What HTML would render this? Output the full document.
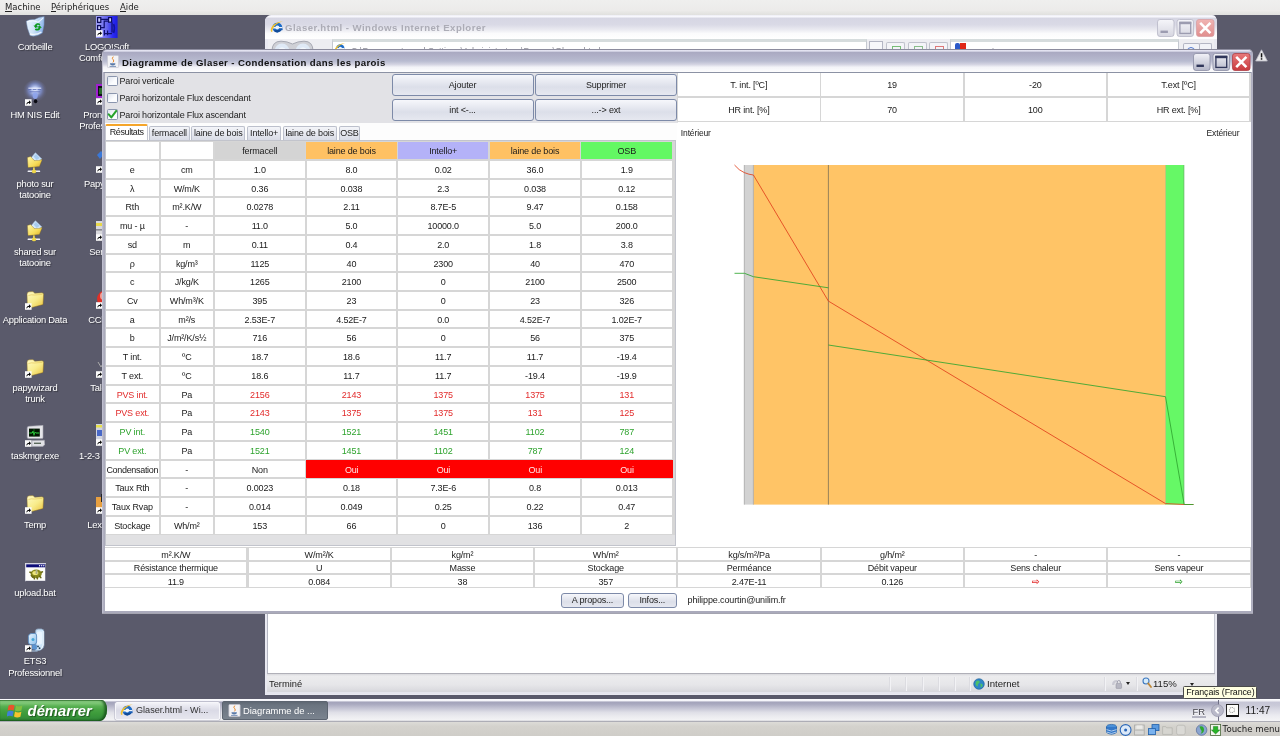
<!DOCTYPE html>
<html lang="fr"><head><meta charset="utf-8"><title>Diagramme de Glaser</title>
<style>

html,body{margin:0;padding:0;}
body{width:1280px;height:736px;overflow:hidden;background:#5a5a6b;font-family:"Liberation Sans","DejaVu Sans",sans-serif;}
#screen{position:relative;width:1280px;height:736px;overflow:hidden;background:#5a5a6b;will-change:transform;}
.a{position:absolute;}
.t{position:absolute;white-space:nowrap;line-height:1;}
/* host menu bar */
#menubar{left:0;top:0;width:1280px;height:14.6px;background:linear-gradient(#efefee,#ecebea 70%,#e0e0de);}
#menubar .t{font-family:"DejaVu Sans","Liberation Sans",sans-serif;font-size:8.5px;color:#222;top:2.6px;}
#menubar u{text-decoration:underline;}
/* desktop icons */
.dl{position:absolute;white-space:nowrap;line-height:11px;font-size:9.4px;letter-spacing:-.25px;color:#fff;text-align:center;text-shadow:1px 1px 1px rgba(0,0,0,.4);}
.ico{position:absolute;}
/* IE window */
#ie{left:265px;top:15.5px;width:952px;height:679.2px;background:#e9e9f1;border-radius:5px 5px 0 0;}
/* Java window */
#jw{left:102.4px;top:49px;width:1150.2px;height:564.7px;background:linear-gradient(90deg,#c4c4d4,#aaaabb 2px,#aaaabb 1148px,#b4b4c4);border-bottom:1.6px solid #a4a4b0;box-sizing:border-box;border-radius:5px 5px 0 0;}
.cell{position:absolute;letter-spacing:-.15px;background:#fff;text-align:center;white-space:nowrap;overflow:hidden;color:#1a1a1a;}
.jt{letter-spacing:-.15px;}
.btn{position:absolute;letter-spacing:-.15px;border:1px solid #7d8aa8;border-radius:3px;background:linear-gradient(#f6f7fb,#dcdfe9 60%,#e6e8f0);text-align:center;color:#222;box-sizing:border-box;white-space:nowrap;}
.tab{position:absolute;letter-spacing:-.15px;box-sizing:border-box;border:1px solid #bcc0cc;border-bottom:none;border-radius:2px 2px 0 0;background:linear-gradient(#f4f5f9,#d9dce6);text-align:center;color:#222;white-space:nowrap;}
</style></head>
<body>
<div id="screen">
<div id="menubar" class="a"><span class="t" style="left:5px">Machine</span><span class="t" style="left:51px">Périphériques</span><span class="t" style="left:120px">Aide</span><i class="a" style="left:5.4px;top:11.4px;width:6.6px;height:.9px;background:#222"></i><i class="a" style="left:51.4px;top:11.4px;width:4.6px;height:.9px;background:#222"></i><i class="a" style="left:120.2px;top:11.4px;width:5.4px;height:.9px;background:#222"></i></div>
<svg class="ico" style="left:96px;top:16px" width="22" height="22" viewBox="0 0 22 22"><defs><linearGradient id="glogo" x1="0" y1="0" x2="1" y2="0"><stop offset="0" stop-color="#a0a0f4"/><stop offset=".5" stop-color="#6464ee"/><stop offset=".78" stop-color="#2a2af4"/><stop offset="1" stop-color="#1c1cd8"/></linearGradient></defs><rect x="0" y="0" width="21.6" height="22" fill="url(#glogo)"/><path d="M1.6 1.6h3.2v4.8h-3.2zM12.6 1.6h3v4.6h-3zM1.6 9.6h3v4h-3z" fill="#c8c8fa" stroke="#0c0c5c" stroke-width="1.2"/><path d="M4.8 3.4h7.8M4.8 11.6h3.4v-6.4h4.4M8.4 14v5.4M11.6 14.6v4.6M8 17.6h8M16 6.4v10" fill="none" stroke="#10106e" stroke-width="1.2"/><path d="M17.6 8 q1.6 4 0 9" fill="none" stroke="#0a0a7a" stroke-width="1.6" stroke-opacity=".7"/></svg>
<svg class="ico" style="left:96.0px;top:30.4px" width="6.6" height="7" viewBox="0 0 7 7"><rect x="0" y="0" width="7" height="7" fill="#fbfbfb"/><path d="M1.4 6 C1.4 3.6 2.8 2.6 4.3 2.6 L4.3 1 L6.4 3.2 L4.3 5.3 L4.3 4 C3.2 4 2.4 4.6 1.4 6Z" fill="#080808"/></svg>
<div class="dl" style="left:52px;top:41px;width:110px">LOGO!Soft</div>
<div class="dl" style="left:50px;top:52px;width:110px">Comfort V5.0</div>
<svg class="ico" style="left:96px;top:84px" width="22" height="21" viewBox="0 0 22 21"><rect x="0" y="0" width="22" height="14" fill="#a020d0"/><rect x="2" y="2" width="18" height="10" fill="#101018"/><rect x="3" y="4" width="4" height="6" fill="#2a6a2a"/></svg>
<svg class="ico" style="left:96.0px;top:98.0px" width="6.6" height="7" viewBox="0 0 7 7"><rect x="0" y="0" width="7" height="7" fill="#fbfbfb"/><path d="M1.4 6 C1.4 3.6 2.8 2.6 4.3 2.6 L4.3 1 L6.4 3.2 L4.3 5.3 L4.3 4 C3.2 4 2.4 4.6 1.4 6Z" fill="#080808"/></svg>
<div class="dl" style="left:51px;top:109px;width:110px">Pronote 6.1</div>
<div class="dl" style="left:51px;top:120px;width:110px">Professionnel</div>
<svg class="ico" style="left:96px;top:150px" width="22" height="12" viewBox="0 0 22 12"><path d="M1 5 l4-4 l3 3 l-4 5z" fill="#3a78d8"/></svg>
<svg class="ico" style="left:96.0px;top:166.0px" width="6.6" height="7" viewBox="0 0 7 7"><rect x="0" y="0" width="7" height="7" fill="#fbfbfb"/><path d="M1.4 6 C1.4 3.6 2.8 2.6 4.3 2.6 L4.3 1 L6.4 3.2 L4.3 5.3 L4.3 4 C3.2 4 2.4 4.6 1.4 6Z" fill="#080808"/></svg>
<div class="dl" style="left:52px;top:178px;width:110px">Papywizard</div>
<svg class="ico" style="left:96px;top:221px" width="22" height="14" viewBox="0 0 22 14"><rect x="0" y="0" width="22" height="14" fill="#d8d8dc"/><rect x="0" y="2" width="22" height="3" fill="#e8d84a"/><rect x="0" y="8" width="22" height="1.6" fill="#8a8a92"/></svg>
<svg class="ico" style="left:96.0px;top:234.0px" width="6.6" height="7" viewBox="0 0 7 7"><rect x="0" y="0" width="7" height="7" fill="#fbfbfb"/><path d="M1.4 6 C1.4 3.6 2.8 2.6 4.3 2.6 L4.3 1 L6.4 3.2 L4.3 5.3 L4.3 4 C3.2 4 2.4 4.6 1.4 6Z" fill="#080808"/></svg>
<div class="dl" style="left:52px;top:246px;width:110px">Serveurs</div>
<svg class="ico" style="left:96px;top:289px" width="22" height="16" viewBox="0 0 22 16"><circle cx="10" cy="10" r="9" fill="#e03028"/><circle cx="8" cy="7" r="4" fill="#f0a098"/></svg>
<svg class="ico" style="left:96.0px;top:302.0px" width="6.6" height="7" viewBox="0 0 7 7"><rect x="0" y="0" width="7" height="7" fill="#fbfbfb"/><path d="M1.4 6 C1.4 3.6 2.8 2.6 4.3 2.6 L4.3 1 L6.4 3.2 L4.3 5.3 L4.3 4 C3.2 4 2.4 4.6 1.4 6Z" fill="#080808"/></svg>
<div class="dl" style="left:52px;top:314px;width:110px">CCleaner</div>
<svg class="ico" style="left:97px;top:361px" width="8" height="8" viewBox="0 0 8 8"><path d="M1 1l3 5l3-5" stroke="#aaa" fill="none"/></svg>
<svg class="ico" style="left:96.0px;top:371.0px" width="6.6" height="7" viewBox="0 0 7 7"><rect x="0" y="0" width="7" height="7" fill="#fbfbfb"/><path d="M1.4 6 C1.4 3.6 2.8 2.6 4.3 2.6 L4.3 1 L6.4 3.2 L4.3 5.3 L4.3 4 C3.2 4 2.4 4.6 1.4 6Z" fill="#080808"/></svg>
<div class="dl" style="left:52px;top:382px;width:110px">Talend 3</div>
<svg class="ico" style="left:96px;top:424px" width="22" height="16" viewBox="0 0 22 16"><rect x="0" y="0" width="22" height="16" fill="#d0d4e0"/><rect x="0" y="1" width="22" height="2.5" fill="#e8e04a"/><rect x="1" y="6" width="6" height="6" fill="#4868c8"/></svg>
<svg class="ico" style="left:96.0px;top:439.0px" width="6.6" height="7" viewBox="0 0 7 7"><rect x="0" y="0" width="7" height="7" fill="#fbfbfb"/><path d="M1.4 6 C1.4 3.6 2.8 2.6 4.3 2.6 L4.3 1 L6.4 3.2 L4.3 5.3 L4.3 4 C3.2 4 2.4 4.6 1.4 6Z" fill="#080808"/></svg>
<div class="dl" style="left:52px;top:450px;width:110px">1-2-3 Schéma</div>
<svg class="ico" style="left:96px;top:494px" width="22" height="14" viewBox="0 0 22 14"><rect x="0" y="3" width="12" height="11" fill="#e8a040"/><rect x="5" y="0" width="2" height="8" fill="#222"/></svg>
<svg class="ico" style="left:96.0px;top:507.0px" width="6.6" height="7" viewBox="0 0 7 7"><rect x="0" y="0" width="7" height="7" fill="#fbfbfb"/><path d="M1.4 6 C1.4 3.6 2.8 2.6 4.3 2.6 L4.3 1 L6.4 3.2 L4.3 5.3 L4.3 4 C3.2 4 2.4 4.6 1.4 6Z" fill="#080808"/></svg>
<div class="dl" style="left:53px;top:519px;width:110px">Lexmark 5</div>
<svg class="ico" style="left:25px;top:16px" width="21" height="22" viewBox="0 0 21 22"><defs><linearGradient id="gbin" x1="0" y1="0" x2="1" y2=".3"><stop offset="0" stop-color="#eef6ff"/><stop offset=".55" stop-color="#cfe4f8"/><stop offset="1" stop-color="#8fb6ec"/></linearGradient></defs><path d="M1.2 5.2 Q4 3.2 9.5 3.6 Q14 .6 19.2 .4 Q19.8 9 17.4 17 Q11 21.6 5 19.6 Q1.8 12 1.2 5.2Z" fill="url(#gbin)" stroke="#6d86b0" stroke-width=".7" stroke-opacity=".7"/><path d="M2.4 5.6 Q9 3.6 13 6.4 Q16 4 18.4 1.6" fill="none" stroke="#f8fcff" stroke-width="1.1" stroke-opacity=".85"/><path d="M5 17.8 Q11 19.6 16.4 16" fill="none" stroke="#ffffff" stroke-width="1.4" stroke-opacity=".8"/><path d="M15.4 8.2 a3.3 3.3 0 0 0 -5.6 1.4 l-1.3 -.2 l2.2 2.8 l2.4 -2.2 l-1.4 -.2 a1.6 1.6 0 0 1 2.6 -.5z" fill="#0c9a1c"/><path d="M9.8 13.4 a3.3 3.3 0 0 0 5.8 -1.6 l1.2 .1 l-2.1 -2.7 l-2.4 2.2 l1.5 .2 a1.6 1.6 0 0 1 -2.7 .6z" fill="#0c9a1c"/></svg>
<div class="dl" style="left:-20px;top:41px;width:110px">Corbeille</div>
<svg class="ico" style="left:22px;top:80px" width="26" height="26" viewBox="0 0 26 26"><defs><radialGradient id="gnis" cx=".5" cy=".42" r=".5"><stop offset="0" stop-color="#e6ecfc"/><stop offset=".28" stop-color="#b4c2ee"/><stop offset=".55" stop-color="#7c8cc8" stop-opacity=".8"/><stop offset=".85" stop-color="#6a6f98" stop-opacity=".25"/><stop offset="1" stop-color="#6a6f98" stop-opacity="0"/></radialGradient></defs><circle cx="13" cy="12" r="12" fill="url(#gnis)"/><path d="M6.4 9.6h3M10.8 9.6h3.6M15.6 9.6h3.4M7.4 11.8h11" stroke="#5668b4" stroke-width="1" stroke-opacity=".8"/><path d="M6.4 8.2h12.8" stroke="#eef2ff" stroke-width="1" stroke-opacity=".9"/><ellipse cx="13.2" cy="15.6" rx="2.6" ry="3.4" fill="#8ea4ec" fill-opacity=".9"/><ellipse cx="13.6" cy="21.2" rx="1.7" ry="2" fill="#0a0a12"/></svg>
<svg class="ico" style="left:25.0px;top:98.6px" width="6.6" height="7" viewBox="0 0 7 7"><rect x="0" y="0" width="7" height="7" fill="#fbfbfb"/><path d="M1.4 6 C1.4 3.6 2.8 2.6 4.3 2.6 L4.3 1 L6.4 3.2 L4.3 5.3 L4.3 4 C3.2 4 2.4 4.6 1.4 6Z" fill="#080808"/></svg>
<div class="dl" style="left:-20px;top:109px;width:110px">HM NIS Edit</div>
<svg class="ico" style="left:26px;top:152px" width="18" height="22" viewBox="0 0 18 22"><defs><linearGradient id="gnfa" x1="0" y1="0" x2="1" y2="1"><stop offset="0" stop-color="#fff6a8"/><stop offset=".6" stop-color="#f6dc58"/><stop offset="1" stop-color="#d8a828"/></linearGradient></defs><path d="M5 6 L9.4 .8 L15.8 7 L11 10.6Z" fill="#d4e8fa" stroke="#a8c8ec" stroke-width=".6"/><path d="M7.6 4.4 L10 2 L13.6 6 L10.6 8Z" fill="#a8ccf0"/><path d="M1.4 5.4 L4.6 4.6 L8.4 8.6 L13 8.4 L16.2 7.4 L13.4 14.6 L2 15.6Z" fill="url(#gnfa)" stroke="#8a6a18" stroke-width=".5" stroke-opacity=".7"/><rect x="1.6" y="18.6" width="12.6" height="1.5" rx=".7" fill="#f0f0f6"/><rect x="7" y="15.4" width="1.8" height="3" fill="#e8d050"/><ellipse cx="8" cy="19.4" rx="2.1" ry="1.9" fill="#eed648"/></svg>
<div class="dl" style="left:-20px;top:178px;width:110px">photo sur</div>
<div class="dl" style="left:-20px;top:189px;width:110px">tatooine</div>
<svg class="ico" style="left:26px;top:220px" width="18" height="22" viewBox="0 0 18 22"><defs><linearGradient id="gnfb" x1="0" y1="0" x2="1" y2="1"><stop offset="0" stop-color="#fff6a8"/><stop offset=".6" stop-color="#f6dc58"/><stop offset="1" stop-color="#d8a828"/></linearGradient></defs><path d="M5 6 L9.4 .8 L15.8 7 L11 10.6Z" fill="#d4e8fa" stroke="#a8c8ec" stroke-width=".6"/><path d="M7.6 4.4 L10 2 L13.6 6 L10.6 8Z" fill="#a8ccf0"/><path d="M1.4 5.4 L4.6 4.6 L8.4 8.6 L13 8.4 L16.2 7.4 L13.4 14.6 L2 15.6Z" fill="url(#gnfb)" stroke="#8a6a18" stroke-width=".5" stroke-opacity=".7"/><rect x="1.6" y="18.6" width="12.6" height="1.5" rx=".7" fill="#f0f0f6"/><rect x="7" y="15.4" width="1.8" height="3" fill="#e8d050"/><ellipse cx="8" cy="19.4" rx="2.1" ry="1.9" fill="#eed648"/></svg>
<div class="dl" style="left:-20px;top:246px;width:110px">shared sur</div>
<div class="dl" style="left:-20px;top:257px;width:110px">tatooine</div>
<svg class="ico" style="left:26px;top:291px" width="19" height="17" viewBox="0 0 19 17"><defs><linearGradient id="gfoa" x1="0" y1="0" x2=".9" y2="1"><stop offset="0" stop-color="#fffac4"/><stop offset=".55" stop-color="#f8ec8c"/><stop offset="1" stop-color="#ecc848"/></linearGradient></defs><path d="M1 3.2 Q1 1 3 .8 L6.4 .6 Q8 .8 8.6 2.2 L16 1.8 Q17.6 1.8 17.6 3.4 L17 13.6 L6 16.4 Q1.6 16.2 1.3 13 Z" fill="url(#gfoa)" stroke="#8a6c1c" stroke-width=".6" stroke-opacity=".75"/><path d="M2.4 4.6 Q5 3.4 8.6 4 L16.4 3.4" fill="none" stroke="#e0c050" stroke-width=".7" stroke-opacity=".8"/></svg>
<svg class="ico" style="left:25.0px;top:303.3px" width="6.6" height="7" viewBox="0 0 7 7"><rect x="0" y="0" width="7" height="7" fill="#fbfbfb"/><path d="M1.4 6 C1.4 3.6 2.8 2.6 4.3 2.6 L4.3 1 L6.4 3.2 L4.3 5.3 L4.3 4 C3.2 4 2.4 4.6 1.4 6Z" fill="#080808"/></svg>
<div class="dl" style="left:-20px;top:314px;width:110px">Application Data</div>
<svg class="ico" style="left:26px;top:359px" width="19" height="17" viewBox="0 0 19 17"><defs><linearGradient id="gfob" x1="0" y1="0" x2=".9" y2="1"><stop offset="0" stop-color="#fffac4"/><stop offset=".55" stop-color="#f8ec8c"/><stop offset="1" stop-color="#ecc848"/></linearGradient></defs><path d="M1 3.2 Q1 1 3 .8 L6.4 .6 Q8 .8 8.6 2.2 L16 1.8 Q17.6 1.8 17.6 3.4 L17 13.6 L6 16.4 Q1.6 16.2 1.3 13 Z" fill="url(#gfob)" stroke="#8a6c1c" stroke-width=".6" stroke-opacity=".75"/><path d="M2.4 4.6 Q5 3.4 8.6 4 L16.4 3.4" fill="none" stroke="#e0c050" stroke-width=".7" stroke-opacity=".8"/></svg>
<svg class="ico" style="left:25.0px;top:371.3px" width="6.6" height="7" viewBox="0 0 7 7"><rect x="0" y="0" width="7" height="7" fill="#fbfbfb"/><path d="M1.4 6 C1.4 3.6 2.8 2.6 4.3 2.6 L4.3 1 L6.4 3.2 L4.3 5.3 L4.3 4 C3.2 4 2.4 4.6 1.4 6Z" fill="#080808"/></svg>
<div class="dl" style="left:-20px;top:382px;width:110px">papywizard</div>
<div class="dl" style="left:-20px;top:393px;width:110px">trunk</div>
<svg class="ico" style="left:25px;top:425px" width="20" height="22" viewBox="0 0 20 22"><path d="M2.2 3 Q2.2 1.4 4 1.3 L16 .6 L18 .2 L18 12.4 Q18 13.6 16.4 13.6 L3.6 13.6 Q2.2 13.6 2.2 12Z" fill="#e6e6ea" stroke="#a4a4ae" stroke-width=".6"/><rect x="4" y="3.6" width="10.8" height="8" fill="#021402"/><path d="M4.4 8 h2.8 l.8 -1.8 l1 3.6 l1 -2.6 l.8 .8 h3.6" fill="none" stroke="#30d840" stroke-width="1"/><path d="M9 4v7.4" stroke="#1c8c28" stroke-width=".7"/><path d="M7 15.6 L19.4 15.2 L19.8 19.4 L18 21.4 L7 21.4Z" fill="#e2e2e6" stroke="#a4a4ae" stroke-width=".6"/><rect x="9" y="17.6" width="7" height="1.4" fill="#5c6a5c"/></svg>
<svg class="ico" style="left:25.0px;top:439.8px" width="6.6" height="7" viewBox="0 0 7 7"><rect x="0" y="0" width="7" height="7" fill="#fbfbfb"/><path d="M1.4 6 C1.4 3.6 2.8 2.6 4.3 2.6 L4.3 1 L6.4 3.2 L4.3 5.3 L4.3 4 C3.2 4 2.4 4.6 1.4 6Z" fill="#080808"/></svg>
<div class="dl" style="left:-20px;top:450px;width:110px">taskmgr.exe</div>
<svg class="ico" style="left:26px;top:495px" width="19" height="17" viewBox="0 0 19 17"><defs><linearGradient id="gfoc" x1="0" y1="0" x2=".9" y2="1"><stop offset="0" stop-color="#fffac4"/><stop offset=".55" stop-color="#f8ec8c"/><stop offset="1" stop-color="#ecc848"/></linearGradient></defs><path d="M1 3.2 Q1 1 3 .8 L6.4 .6 Q8 .8 8.6 2.2 L16 1.8 Q17.6 1.8 17.6 3.4 L17 13.6 L6 16.4 Q1.6 16.2 1.3 13 Z" fill="url(#gfoc)" stroke="#8a6c1c" stroke-width=".6" stroke-opacity=".75"/><path d="M2.4 4.6 Q5 3.4 8.6 4 L16.4 3.4" fill="none" stroke="#e0c050" stroke-width=".7" stroke-opacity=".8"/></svg>
<svg class="ico" style="left:25.0px;top:507.3px" width="6.6" height="7" viewBox="0 0 7 7"><rect x="0" y="0" width="7" height="7" fill="#fbfbfb"/><path d="M1.4 6 C1.4 3.6 2.8 2.6 4.3 2.6 L4.3 1 L6.4 3.2 L4.3 5.3 L4.3 4 C3.2 4 2.4 4.6 1.4 6Z" fill="#080808"/></svg>
<div class="dl" style="left:-20px;top:519px;width:110px">Temp</div>
<svg class="ico" style="left:25px;top:563px" width="21" height="19" viewBox="0 0 21 19"><rect x=".5" y=".5" width="20" height="17.6" fill="#fdfdfa" stroke="#d8d8e4" stroke-width=".9"/><path d="M.4 18.4 H20.8 V1" fill="none" stroke="#3c3c50" stroke-width=".8"/><rect x="1.2" y="1.3" width="18.8" height="3" fill="#0c0c78"/><circle cx="14.6" cy="2.8" r=".7" fill="#fff"/><circle cx="16.7" cy="2.8" r=".7" fill="#fff"/><circle cx="18.8" cy="2.8" r=".7" fill="#fff"/><ellipse cx="11.2" cy="10.8" rx="5.6" ry="4.2" fill="#8a8a1c"/><path d="M6.4 12.4 l1.4 1.8 M9 13.8 l.4 2 M12 14.2 l.4 1.6 M14.6 13.2 l1.2 1.4 M6 9.6 l-1 -.4 M16.4 9.4 l1 -.6" stroke="#6a6a14" stroke-width="1.6" stroke-linecap="round"/><ellipse cx="10.4" cy="10" rx="3" ry="2" fill="#eee67c"/><rect x="10.6" y="7" width="1.8" height="4" fill="#b0b088"/></svg>
<div class="dl" style="left:-20px;top:587px;width:110px">upload.bat</div>
<svg class="ico" style="left:26px;top:628px" width="20" height="24" viewBox="0 0 20 24"><defs><linearGradient id="gets" x1="0" y1="0" x2="1" y2="1"><stop offset="0" stop-color="#eaf6ff"/><stop offset="1" stop-color="#8cc0ec"/></linearGradient></defs><path d="M9.6 3 Q9.6 1 12 1 L15.4 1 Q18 1.2 18 4 L18 17 Q17.6 21.6 13 22.4 L9.6 22.4Z" fill="#cfe6fa" stroke="#8aa4c0" stroke-width=".9"/><rect x="11" y="3.4" width="5" height="13" rx="1.4" fill="#eaf5ff"/><path d="M17.2 3 V17 Q16.8 20 14 21.4" fill="none" stroke="#f4faff" stroke-width="1"/><path d="M2.4 8.6 Q2.4 6 5 5.6 L9 5.4 Q10.6 5.6 10.6 8 L10.6 14 Q10.4 16.4 8 16.6 L4.6 16.6 Q2.4 16.4 2.4 14Z" fill="url(#gets)" stroke="#5c8cc0" stroke-width=".9"/><circle cx="7" cy="11.4" r="1.5" fill="#48a8d8"/><path d="M6.2 16.8 L6 21 Q8.4 22.6 11 21 L10.8 16.8Z" fill="#5c94d0"/><circle cx="12" cy="18.4" r=".9" fill="#20405c"/><circle cx="13.6" cy="20.2" r=".9" fill="#20405c"/><path d="M6 23h5.6" stroke="#a8c8e8" stroke-width="1"/></svg>
<svg class="ico" style="left:25.0px;top:644.8px" width="6.6" height="7" viewBox="0 0 7 7"><rect x="0" y="0" width="7" height="7" fill="#fbfbfb"/><path d="M1.4 6 C1.4 3.6 2.8 2.6 4.3 2.6 L4.3 1 L6.4 3.2 L4.3 5.3 L4.3 4 C3.2 4 2.4 4.6 1.4 6Z" fill="#080808"/></svg>
<div class="dl" style="left:-20px;top:655px;width:110px">ETS3</div>
<div class="dl" style="left:-20px;top:667px;width:110px">Professionnel</div>
<svg class="ico" style="left:1255px;top:49px" width="13" height="13" viewBox="0 0 13 13"><path d="M6.5 .8 L12.3 12 H.7Z" fill="#e9e9ec" stroke="#bdbdc6" stroke-width=".8"/><rect x="5.8" y="4.2" width="1.5" height="4.2" fill="#111"/><rect x="5.8" y="9.2" width="1.5" height="1.5" fill="#111"/></svg>
<div id="ie" class="a">
<div class="a" style="left:1.5px;top:-.8px;width:949px;height:4px;background:#f1f1f8;border-radius:4px 4px 0 0"></div>
<div class="a" style="left:0;top:0;width:952px;height:23px;border-radius:5px 5px 0 0;background:linear-gradient(#fbfbff 0,#f3f3fa 5%,#d6d6e3 9%,#dadae6 38%,#e9e9f0 58%,#fbfbfc 76%,#ffffff 100%)"></div>
<svg class="ico" style="left:5px;top:4px" width="14" height="14" viewBox="0 0 16 16"><circle cx="8.4" cy="8.6" r="5.6" fill="#1d6cc8"/><path d="M4 12 a5.6 5.6 0 0 0 9.6 -1.4 z" fill="#124a96"/><circle cx="8.4" cy="8.6" r="2.3" fill="#eef4fb"/><rect x="3" y="8" width="11" height="1.7" fill="#eef4fb"/><rect x="10" y="9.6" width="4.4" height="2" fill="#1a5cb4"/><path d="M1.2 13.5 C-1 8 7 1.2 14.6 1.6 C9 2.6 2.2 8 2.6 13.6Z" fill="#f0c030"/></svg>
<div class="t" style="left:20px;top:7.2px;font-size:9.6px;font-weight:bold;color:#acacb6;letter-spacing:.48px">Glaser.html - Windows Internet Explorer</div>
<svg class="ico" style="left:892px;top:3px" width="58" height="18" viewBox="0 0 58 18"><defs><linearGradient id="cbi" x1="0" y1="0" x2="0" y2="1"><stop offset="0" stop-color="#f6f6fa"/><stop offset="1" stop-color="#d6d6e0"/></linearGradient><linearGradient id="cci" x1="0" y1="0" x2="0" y2="1"><stop offset="0" stop-color="#f0b4b2"/><stop offset="1" stop-color="#e08e8e"/></linearGradient></defs><rect x=".5" y=".5" width="16.5" height="17" rx="2.5" fill="url(#cbi)" stroke="#b8b8c6" stroke-width=".8"/><rect x="3.5" y="11.6" width="7.4" height="2.4" fill="#9c9cb0"/><rect x="20" y=".5" width="16.5" height="17" rx="2.5" fill="url(#cbi)" stroke="#b8b8c6" stroke-width=".8"/><rect x="22.9" y="3.4" width="10.8" height="11" fill="none" stroke="#9c9cb0" stroke-width="1.3"/><rect x="22.3" y="2.8" width="12" height="2.4" fill="#9c9cb0"/><rect x="39.5" y=".5" width="17.5" height="17" rx="2.5" fill="url(#cci)" stroke="#d8a0a4" stroke-width=".8"/><path d="M43.2 3.8 L53.4 14.2 M53.4 3.8 L43.2 14.2" stroke="#fff" stroke-width="2.6" stroke-linecap="butt"/></svg>
<div class="a" style="left:3px;top:23px;width:946px;height:12px;background:#eeeef2"></div>
<svg class="ico" style="left:6px;top:24px" width="44" height="11" viewBox="0 0 44 11"><path d="M1 11 Q1 1.2 10 1.2 Q16 1.2 21.5 4 Q27 1.2 33 1.2 Q42 1.2 42 11Z" fill="#cfd0d6" stroke="#a6a8b2" stroke-width="1"/><circle cx="11" cy="11" r="7.4" fill="#dfe9f6"/><circle cx="32" cy="11" r="7.4" fill="#dfe9f6"/><circle cx="11" cy="11.5" r="4" fill="#f3f7fc"/><circle cx="32" cy="11.5" r="4" fill="#f3f7fc"/></svg>
<div class="a" style="left:67px;top:23px;width:535px;height:12px;background:#fff;border:1px solid #c4c8d0;border-top:3px solid #d6dcdd;border-bottom:none;box-sizing:border-box"></div>
<svg class="ico" style="left:69px;top:26px" width="12" height="12" viewBox="0 0 16 16"><circle cx="8.4" cy="8.6" r="5.6" fill="#1d6cc8"/><path d="M4 12 a5.6 5.6 0 0 0 9.6 -1.4 z" fill="#124a96"/><circle cx="8.4" cy="8.6" r="2.3" fill="#eef4fb"/><rect x="3" y="8" width="11" height="1.7" fill="#eef4fb"/><rect x="10" y="9.6" width="4.4" height="2" fill="#1a5cb4"/><path d="M1.2 13.5 C-1 8 7 1.2 14.6 1.6 C9 2.6 2.2 8 2.6 13.6Z" fill="#f0c030"/></svg>
<div class="t" style="left:86px;top:31.6px;font-size:9px;color:#8e8e98">C:\Documents and Settings\Administrateur\Bureau\Glaser.html</div>
<div class="a" style="left:604px;top:25px;width:12px;height:10px;background:#f7f7fa;border:1px solid #b4b6c4;border-bottom:none"></div>
<div class="a" style="left:621px;top:26px;width:17px;height:9px;background:#f4f4f8;border:1px solid #c0c2cc;border-bottom:none;border-radius:2px 2px 0 0"></div>
<div class="a" style="left:627px;top:30px;width:7px;height:5px;border:1px solid #58b058;border-bottom:none;opacity:.8"></div>
<div class="a" style="left:643px;top:26px;width:17px;height:9px;background:#f4f4f8;border:1px solid #c0c2cc;border-bottom:none;border-radius:2px 2px 0 0"></div>
<div class="a" style="left:649px;top:30px;width:7px;height:5px;border:1px solid #70b070;border-bottom:none;opacity:.8"></div>
<div class="a" style="left:664px;top:26px;width:17px;height:9px;background:#f4f4f8;border:1px solid #c0c2cc;border-bottom:none;border-radius:2px 2px 0 0"></div>
<div class="a" style="left:670px;top:30px;width:7px;height:5px;border:1px solid #d85a5a;border-bottom:none;opacity:.8"></div>
<div class="a" style="left:685px;top:23px;width:229px;height:12px;background:#fff;border:1px solid #c4c8d0;border-top:3px solid #d6dcdd;border-bottom:none;box-sizing:border-box"></div>
<div class="a" style="left:690px;top:27px;width:5px;height:8px;background:#2a58c8;border-radius:2px 2px 0 0"></div>
<div class="a" style="left:695px;top:27px;width:6px;height:8px;background:#e02818"></div>
<div class="t" style="left:705px;top:32px;font-size:9px;color:#9a9aa4">Google</div>
<div class="a" style="left:918px;top:27px;width:15px;height:8px;background:#f2f3f8;border:1px solid #b4b6c4;border-bottom:none;border-radius:2px 2px 0 0"></div>
<div class="a" style="left:922px;top:31px;width:6px;height:6px;border:1.5px solid #5078d0;border-radius:50%"></div>
<div class="a" style="left:934px;top:27px;width:11px;height:8px;background:#f2f3f8;border:1px solid #b4b6c4;border-bottom:none;border-radius:2px 2px 0 0"></div>
<div class="a" style="left:2px;top:35px;width:948px;height:623px;background:#fff;border-left:1px solid #b4b6c2;border-right:1px solid #c6c8d2;box-sizing:border-box"></div>
<div class="a" style="left:2px;top:657.6px;width:948px;height:19.2px;background:linear-gradient(#d9d9dd 0,#ececee 12%,#e6e6e9 60%,#d7d7dc 100%);border-top:1px solid #b0b0b8;box-sizing:border-box"></div>
<div class="t" style="left:4px;top:664px;font-size:9.3px;color:#222">Terminé</div>
<div class="a" style="left:624.0px;top:661px;width:1px;height:14px;background:#dcdce1;box-shadow:1px 0 0 #f2f2f5"></div>
<div class="a" style="left:640.0px;top:661px;width:1px;height:14px;background:#dcdce1;box-shadow:1px 0 0 #f2f2f5"></div>
<div class="a" style="left:656.5px;top:661px;width:1px;height:14px;background:#dcdce1;box-shadow:1px 0 0 #f2f2f5"></div>
<div class="a" style="left:673.0px;top:661px;width:1px;height:14px;background:#dcdce1;box-shadow:1px 0 0 #f2f2f5"></div>
<div class="a" style="left:689.0px;top:661px;width:1px;height:14px;background:#dcdce1;box-shadow:1px 0 0 #f2f2f5"></div>
<div class="a" style="left:704.0px;top:661px;width:1px;height:14px;background:#dcdce1;box-shadow:1px 0 0 #f2f2f5"></div>
<div class="a" style="left:839.0px;top:661px;width:1px;height:14px;background:#dcdce1;box-shadow:1px 0 0 #f2f2f5"></div>
<div class="a" style="left:870.5px;top:661px;width:1px;height:14px;background:#dcdce1;box-shadow:1px 0 0 #f2f2f5"></div>
<svg class="ico" style="left:708px;top:662px" width="12" height="12" viewBox="0 0 12 12"><circle cx="6" cy="6" r="5.3" fill="#2f86c8" stroke="#1d5c96" stroke-width=".6"/><path d="M3 3.5 q2-1.6 3.6-.4 q.6 1.6-1 2.4 q-1.4 1.2-.6 3 q-2-.6-2.6-2.6z" fill="#4cc06a"/><path d="M7.6 5.6 q2 0 2.2 1.8 q-.8 2-2.4 2.2 q.8-2-.2-3z" fill="#4cc06a"/></svg>
<div class="t" style="left:722px;top:663px;font-size:9.6px;color:#222">Internet</div>
<svg class="ico" style="left:846px;top:662px" width="12" height="12" viewBox="0 0 12 12"><path d="M1 7 q0-5 5-5 v2 q-2.6 0-2.6 3z" fill="#c9c9d2"/><rect x="5" y="5.4" width="5.6" height="5" rx=".6" fill="#b7b7c2" stroke="#8d8d9a" stroke-width=".5"/><path d="M6.3 5.4 v-1.4 a1.5 1.5 0 0 1 3 0 v1.4" fill="none" stroke="#9a9aa8" stroke-width=".9"/></svg>
<div class="a" style="left:861px;top:666px;width:0;height:0;border-left:2.5px solid transparent;border-right:2.5px solid transparent;border-top:3px solid #222"></div>
<svg class="ico" style="left:877px;top:661px" width="10" height="12" viewBox="0 0 10 12"><circle cx="4" cy="4" r="3" fill="#d6ecfb" stroke="#3d78c0" stroke-width="1.1"/><path d="M6.2 6.4 L9 10" stroke="#c08a3a" stroke-width="1.8" stroke-linecap="round"/></svg>
<div class="t" style="left:888px;top:663px;font-size:9.6px;color:#222">115%</div>
<div class="a" style="left:925px;top:667px;width:0;height:0;border-left:2.5px solid transparent;border-right:2.5px solid transparent;border-top:3px solid #222"></div>
<div class="a" style="left:0;top:676.8px;width:952px;height:1.9px;background:#e6e6ee"></div>
</div>
<div id="jw" class="a"></div>
<div class="a" style="left:103px;top:50px;width:1149px;height:22px;border-radius:4px 4px 0 0;background:linear-gradient(#e6e6f3 0,#dcdcec 6%,#a9a9c1 9%,#adadc5 20%,#b8bbd0 50%,#d2d2e1 65%,#f3f3f8 78%,#fdfdfe 100%);box-shadow:0 -1px 0 #8c8c9e"></div>
<svg class="ico" style="left:107px;top:55px" width="12" height="13" viewBox="0 0 12 13"><rect x=".4" y=".4" width="11.2" height="12.2" rx="1" fill="#f3f3f6" stroke="#c4c4d0" stroke-width=".7"/><path d="M6.3 1.6 q-2 1.8 0 3.2 q1.2 1.2-.4 2.6" fill="none" stroke="#e8892a" stroke-width="1"/><path d="M3 8.2 h5.4 q.2 2-2.7 2.2 q-2.9-.2-2.7-2.2z" fill="#5a7aa8"/><path d="M2.6 11.4 h6.4" stroke="#5a7aa8" stroke-width=".8"/></svg>
<div class="t" style="left:122px;top:58.2px;font-size:9.6px;font-weight:bold;color:#111;letter-spacing:.4px">Diagramme de Glaser - Condensation dans les parois</div>
<svg class="ico" style="left:1193px;top:53px" width="58" height="18" viewBox="0 0 58 18"><defs><linearGradient id="cba" x1="0" y1="0" x2="0" y2="1"><stop offset="0" stop-color="#f2f2f8"/><stop offset="1" stop-color="#b4b6c8"/></linearGradient><linearGradient id="cca" x1="0" y1="0" x2="0" y2="1"><stop offset="0" stop-color="#e8797a"/><stop offset="1" stop-color="#c83a3e"/></linearGradient></defs><rect x=".5" y=".5" width="16.5" height="17" rx="2.5" fill="url(#cba)" stroke="#8c8ea4" stroke-width=".8"/><rect x="3.5" y="11.6" width="7.4" height="2.4" fill="#30365a"/><rect x="20" y=".5" width="16.5" height="17" rx="2.5" fill="url(#cba)" stroke="#8c8ea4" stroke-width=".8"/><rect x="22.9" y="3.4" width="10.8" height="11" fill="none" stroke="#30365a" stroke-width="1.3"/><rect x="22.3" y="2.8" width="12" height="2.4" fill="#30365a"/><rect x="39.5" y=".5" width="17.5" height="17" rx="2.5" fill="url(#cca)" stroke="#b04048" stroke-width=".8"/><path d="M43.2 3.8 L53.4 14.2 M53.4 3.8 L43.2 14.2" stroke="#fff" stroke-width="2.6" stroke-linecap="butt"/></svg>
<div class="a" style="left:105px;top:72px;width:1145.6px;height:538.6px;background:#fff"></div>
<div class="a" style="left:104px;top:71.8px;width:1147.4px;height:1.6px;background:#8c92a4"></div>
<div class="a" style="left:105px;top:73px;width:286px;height:50px;background:#e2e2e6"></div>
<div class="a" style="left:106.9px;top:75.6px;width:10.8px;height:10.8px;box-sizing:border-box;border:1.1px solid #8a95ad;border-radius:1.5px;background:linear-gradient(135deg,#dfe4ee,#fbfcfe 60%)"></div>
<div class="a" style="left:106.9px;top:92.5px;width:10.8px;height:10.8px;box-sizing:border-box;border:1.1px solid #8a95ad;border-radius:1.5px;background:linear-gradient(135deg,#dfe4ee,#fbfcfe 60%)"></div>
<div class="a" style="left:106.9px;top:109.4px;width:10.8px;height:10.8px;box-sizing:border-box;border:1.1px solid #8a95ad;border-radius:1.5px;background:linear-gradient(135deg,#dfe4ee,#fbfcfe 60%)"></div>
<svg class="ico" style="left:106.9px;top:109.4px" width="10.8" height="10.8" viewBox="0 0 10 10"><path d="M1.6 5 L4 7.8 L8.6 1.8" fill="none" stroke="#27a32b" stroke-width="1.9" stroke-linecap="round" stroke-linejoin="round"/></svg>
<div class="t jt" style="left:119.5px;top:77px;font-size:9.00px;color:#222">Paroi verticale</div>
<div class="t jt" style="left:119.5px;top:94px;font-size:9.00px;color:#222">Paroi horizontale Flux descendant</div>
<div class="t jt" style="left:119.5px;top:111px;font-size:9.00px;color:#222">Paroi horizontale Flux ascendant</div>
<div class="a" style="left:391px;top:73px;width:287px;height:50px;background:#e2e2e6"></div>
<div class="btn" style="left:391.50px;top:73.70px;width:142.00px;height:22.60px;line-height:21.10px;font-size:9.00px">Ajouter</div>
<div class="btn" style="left:535.00px;top:73.70px;width:142.00px;height:22.60px;line-height:21.10px;font-size:9.00px">Supprimer</div>
<div class="btn" style="left:391.50px;top:98.70px;width:142.00px;height:22.60px;line-height:21.10px;font-size:9.00px">int &lt;-...</div>
<div class="btn" style="left:535.00px;top:98.70px;width:142.00px;height:22.60px;line-height:21.10px;font-size:9.00px">...-&gt; ext</div>
<div class="a" style="left:677px;top:72.5px;width:574px;height:49.5px;background:#d6d6d6"></div>
<div class="cell" style="left:678.10px;top:72.80px;width:141.45px;height:23.50px;line-height:24.70px;font-size:9.00px;color:#1a1a1a;background:#fff;">T. int. [ºC]</div>
<div class="cell" style="left:821.35px;top:72.80px;width:141.45px;height:23.50px;line-height:24.70px;font-size:9.00px;color:#1a1a1a;background:#fff;">19</div>
<div class="cell" style="left:964.60px;top:72.80px;width:141.45px;height:23.50px;line-height:24.70px;font-size:9.00px;color:#1a1a1a;background:#fff;">-20</div>
<div class="cell" style="left:1107.85px;top:72.80px;width:141.45px;height:23.50px;line-height:24.70px;font-size:9.00px;color:#1a1a1a;background:#fff;">T.ext [ºC]</div>
<div class="cell" style="left:678.10px;top:98.00px;width:141.45px;height:22.80px;line-height:24.00px;font-size:9.00px;color:#1a1a1a;background:#fff;">HR int. [%]</div>
<div class="cell" style="left:821.35px;top:98.00px;width:141.45px;height:22.80px;line-height:24.00px;font-size:9.00px;color:#1a1a1a;background:#fff;">70</div>
<div class="cell" style="left:964.60px;top:98.00px;width:141.45px;height:22.80px;line-height:24.00px;font-size:9.00px;color:#1a1a1a;background:#fff;">100</div>
<div class="cell" style="left:1107.85px;top:98.00px;width:141.45px;height:22.80px;line-height:24.00px;font-size:9.00px;color:#1a1a1a;background:#fff;">HR ext. [%]</div>
<div class="a" style="left:105px;top:122.6px;width:572px;height:17.4px;background:#fdfdfd"></div>
<div class="tab" style="left:149.20px;top:126px;width:40.40px;height:13.6px;line-height:13.4px;font-size:9.00px">fermacell</div>
<div class="tab" style="left:191.20px;top:126px;width:54.10px;height:13.6px;line-height:13.4px;font-size:9.00px">laine de bois</div>
<div class="tab" style="left:247.20px;top:126px;width:33.80px;height:13.6px;line-height:13.4px;font-size:9.00px">Intello+</div>
<div class="tab" style="left:282.80px;top:126px;width:53.80px;height:13.6px;line-height:13.4px;font-size:9.00px">laine de bois</div>
<div class="tab" style="left:338.60px;top:126px;width:21.70px;height:13.6px;line-height:13.4px;font-size:9.00px">OSB</div>
<div class="a" style="left:105px;top:124px;width:43.4px;height:16px;box-sizing:border-box;background:#fff;border:1px solid #c4c6d0;border-bottom:none;border-top:2px solid #f5a52a;border-radius:2px 2px 0 0;text-align:center;font-size:9.00px;line-height:12.4px;color:#1a1a1a;white-space:nowrap;letter-spacing:-.38px">Résultats</div>
<div class="a" style="left:104.6px;top:139.6px;width:571.6px;height:406.8px;box-sizing:border-box;background:#e1e1e3;border:1px solid #c2c4cc"></div>
<div class="a" style="left:105.6px;top:141.1px;width:569px;height:394.2px;background:#d6d6d6"></div>
<div class="cell" style="left:106.00px;top:142.10px;width:52.60px;height:16.73px;line-height:18.73px;font-size:9.00px;color:#1a1a1a;background:#fff;"></div>
<div class="cell" style="left:160.60px;top:142.10px;width:52.40px;height:16.73px;line-height:18.73px;font-size:9.00px;color:#1a1a1a;background:#fff;"></div>
<div class="a" style="left:214.50px;top:141.60px;width:90.40px;height:17.63px;background:#d4d4d4"></div>
<div class="cell" style="left:215.00px;top:142.10px;width:89.60px;height:16.73px;line-height:18.73px;font-size:9.00px;color:#1a1a1a;background:#d4d4d4;">fermacell</div>
<div class="a" style="left:306.10px;top:141.60px;width:90.50px;height:17.63px;background:#ffc163"></div>
<div class="cell" style="left:306.60px;top:142.10px;width:89.70px;height:16.73px;line-height:18.73px;font-size:9.00px;color:#1a1a1a;background:#ffc163;">laine de bois</div>
<div class="a" style="left:397.80px;top:141.60px;width:90.60px;height:17.63px;background:#b4b2f8"></div>
<div class="cell" style="left:398.30px;top:142.10px;width:89.80px;height:16.73px;line-height:18.73px;font-size:9.00px;color:#1a1a1a;background:#b4b2f8;">Intello+</div>
<div class="a" style="left:489.60px;top:141.60px;width:90.60px;height:17.63px;background:#ffc163"></div>
<div class="cell" style="left:490.10px;top:142.10px;width:89.80px;height:16.73px;line-height:18.73px;font-size:9.00px;color:#1a1a1a;background:#ffc163;">laine de bois</div>
<div class="a" style="left:581.40px;top:141.60px;width:90.50px;height:17.63px;background:#63f863"></div>
<div class="cell" style="left:581.90px;top:142.10px;width:89.70px;height:16.73px;line-height:18.73px;font-size:9.00px;color:#1a1a1a;background:#63f863;">OSB</div>
<div class="cell" style="left:106.00px;top:160.83px;width:52.60px;height:16.74px;line-height:18.74px;font-size:9.00px;color:#1a1a1a;background:#fff;">e</div>
<div class="cell" style="left:160.60px;top:160.83px;width:52.40px;height:16.74px;line-height:18.74px;font-size:9.00px;color:#1a1a1a;background:#fff;">cm</div>
<div class="cell" style="left:215.00px;top:160.83px;width:89.60px;height:16.74px;line-height:18.74px;font-size:9.00px;color:#1a1a1a;background:#fff;">1.0</div>
<div class="cell" style="left:306.60px;top:160.83px;width:89.70px;height:16.74px;line-height:18.74px;font-size:9.00px;color:#1a1a1a;background:#fff;">8.0</div>
<div class="cell" style="left:398.30px;top:160.83px;width:89.80px;height:16.74px;line-height:18.74px;font-size:9.00px;color:#1a1a1a;background:#fff;">0.02</div>
<div class="cell" style="left:490.10px;top:160.83px;width:89.80px;height:16.74px;line-height:18.74px;font-size:9.00px;color:#1a1a1a;background:#fff;">36.0</div>
<div class="cell" style="left:581.90px;top:160.83px;width:89.70px;height:16.74px;line-height:18.74px;font-size:9.00px;color:#1a1a1a;background:#fff;">1.9</div>
<div class="cell" style="left:106.00px;top:179.57px;width:52.60px;height:16.74px;line-height:18.74px;font-size:9.00px;color:#1a1a1a;background:#fff;">λ</div>
<div class="cell" style="left:160.60px;top:179.57px;width:52.40px;height:16.74px;line-height:18.74px;font-size:9.00px;color:#1a1a1a;background:#fff;">W/m/K</div>
<div class="cell" style="left:215.00px;top:179.57px;width:89.60px;height:16.74px;line-height:18.74px;font-size:9.00px;color:#1a1a1a;background:#fff;">0.36</div>
<div class="cell" style="left:306.60px;top:179.57px;width:89.70px;height:16.74px;line-height:18.74px;font-size:9.00px;color:#1a1a1a;background:#fff;">0.038</div>
<div class="cell" style="left:398.30px;top:179.57px;width:89.80px;height:16.74px;line-height:18.74px;font-size:9.00px;color:#1a1a1a;background:#fff;">2.3</div>
<div class="cell" style="left:490.10px;top:179.57px;width:89.80px;height:16.74px;line-height:18.74px;font-size:9.00px;color:#1a1a1a;background:#fff;">0.038</div>
<div class="cell" style="left:581.90px;top:179.57px;width:89.70px;height:16.74px;line-height:18.74px;font-size:9.00px;color:#1a1a1a;background:#fff;">0.12</div>
<div class="cell" style="left:106.00px;top:198.31px;width:52.60px;height:16.74px;line-height:18.74px;font-size:9.00px;color:#1a1a1a;background:#fff;">Rth</div>
<div class="cell" style="left:160.60px;top:198.31px;width:52.40px;height:16.74px;line-height:18.74px;font-size:9.00px;color:#1a1a1a;background:#fff;">m².K/W</div>
<div class="cell" style="left:215.00px;top:198.31px;width:89.60px;height:16.74px;line-height:18.74px;font-size:9.00px;color:#1a1a1a;background:#fff;">0.0278</div>
<div class="cell" style="left:306.60px;top:198.31px;width:89.70px;height:16.74px;line-height:18.74px;font-size:9.00px;color:#1a1a1a;background:#fff;">2.11</div>
<div class="cell" style="left:398.30px;top:198.31px;width:89.80px;height:16.74px;line-height:18.74px;font-size:9.00px;color:#1a1a1a;background:#fff;">8.7E-5</div>
<div class="cell" style="left:490.10px;top:198.31px;width:89.80px;height:16.74px;line-height:18.74px;font-size:9.00px;color:#1a1a1a;background:#fff;">9.47</div>
<div class="cell" style="left:581.90px;top:198.31px;width:89.70px;height:16.74px;line-height:18.74px;font-size:9.00px;color:#1a1a1a;background:#fff;">0.158</div>
<div class="cell" style="left:106.00px;top:217.04px;width:52.60px;height:16.73px;line-height:18.73px;font-size:9.00px;color:#1a1a1a;background:#fff;">mu - µ</div>
<div class="cell" style="left:160.60px;top:217.04px;width:52.40px;height:16.73px;line-height:18.73px;font-size:9.00px;color:#1a1a1a;background:#fff;">-</div>
<div class="cell" style="left:215.00px;top:217.04px;width:89.60px;height:16.73px;line-height:18.73px;font-size:9.00px;color:#1a1a1a;background:#fff;">11.0</div>
<div class="cell" style="left:306.60px;top:217.04px;width:89.70px;height:16.73px;line-height:18.73px;font-size:9.00px;color:#1a1a1a;background:#fff;">5.0</div>
<div class="cell" style="left:398.30px;top:217.04px;width:89.80px;height:16.73px;line-height:18.73px;font-size:9.00px;color:#1a1a1a;background:#fff;">10000.0</div>
<div class="cell" style="left:490.10px;top:217.04px;width:89.80px;height:16.73px;line-height:18.73px;font-size:9.00px;color:#1a1a1a;background:#fff;">5.0</div>
<div class="cell" style="left:581.90px;top:217.04px;width:89.70px;height:16.73px;line-height:18.73px;font-size:9.00px;color:#1a1a1a;background:#fff;">200.0</div>
<div class="cell" style="left:106.00px;top:235.77px;width:52.60px;height:16.74px;line-height:18.74px;font-size:9.00px;color:#1a1a1a;background:#fff;">sd</div>
<div class="cell" style="left:160.60px;top:235.77px;width:52.40px;height:16.74px;line-height:18.74px;font-size:9.00px;color:#1a1a1a;background:#fff;">m</div>
<div class="cell" style="left:215.00px;top:235.77px;width:89.60px;height:16.74px;line-height:18.74px;font-size:9.00px;color:#1a1a1a;background:#fff;">0.11</div>
<div class="cell" style="left:306.60px;top:235.77px;width:89.70px;height:16.74px;line-height:18.74px;font-size:9.00px;color:#1a1a1a;background:#fff;">0.4</div>
<div class="cell" style="left:398.30px;top:235.77px;width:89.80px;height:16.74px;line-height:18.74px;font-size:9.00px;color:#1a1a1a;background:#fff;">2.0</div>
<div class="cell" style="left:490.10px;top:235.77px;width:89.80px;height:16.74px;line-height:18.74px;font-size:9.00px;color:#1a1a1a;background:#fff;">1.8</div>
<div class="cell" style="left:581.90px;top:235.77px;width:89.70px;height:16.74px;line-height:18.74px;font-size:9.00px;color:#1a1a1a;background:#fff;">3.8</div>
<div class="cell" style="left:106.00px;top:254.51px;width:52.60px;height:16.74px;line-height:18.74px;font-size:9.00px;color:#1a1a1a;background:#fff;">ρ</div>
<div class="cell" style="left:160.60px;top:254.51px;width:52.40px;height:16.74px;line-height:18.74px;font-size:9.00px;color:#1a1a1a;background:#fff;">kg/m³</div>
<div class="cell" style="left:215.00px;top:254.51px;width:89.60px;height:16.74px;line-height:18.74px;font-size:9.00px;color:#1a1a1a;background:#fff;">1125</div>
<div class="cell" style="left:306.60px;top:254.51px;width:89.70px;height:16.74px;line-height:18.74px;font-size:9.00px;color:#1a1a1a;background:#fff;">40</div>
<div class="cell" style="left:398.30px;top:254.51px;width:89.80px;height:16.74px;line-height:18.74px;font-size:9.00px;color:#1a1a1a;background:#fff;">2300</div>
<div class="cell" style="left:490.10px;top:254.51px;width:89.80px;height:16.74px;line-height:18.74px;font-size:9.00px;color:#1a1a1a;background:#fff;">40</div>
<div class="cell" style="left:581.90px;top:254.51px;width:89.70px;height:16.74px;line-height:18.74px;font-size:9.00px;color:#1a1a1a;background:#fff;">470</div>
<div class="cell" style="left:106.00px;top:273.25px;width:52.60px;height:16.74px;line-height:18.74px;font-size:9.00px;color:#1a1a1a;background:#fff;">c</div>
<div class="cell" style="left:160.60px;top:273.25px;width:52.40px;height:16.74px;line-height:18.74px;font-size:9.00px;color:#1a1a1a;background:#fff;">J/kg/K</div>
<div class="cell" style="left:215.00px;top:273.25px;width:89.60px;height:16.74px;line-height:18.74px;font-size:9.00px;color:#1a1a1a;background:#fff;">1265</div>
<div class="cell" style="left:306.60px;top:273.25px;width:89.70px;height:16.74px;line-height:18.74px;font-size:9.00px;color:#1a1a1a;background:#fff;">2100</div>
<div class="cell" style="left:398.30px;top:273.25px;width:89.80px;height:16.74px;line-height:18.74px;font-size:9.00px;color:#1a1a1a;background:#fff;">0</div>
<div class="cell" style="left:490.10px;top:273.25px;width:89.80px;height:16.74px;line-height:18.74px;font-size:9.00px;color:#1a1a1a;background:#fff;">2100</div>
<div class="cell" style="left:581.90px;top:273.25px;width:89.70px;height:16.74px;line-height:18.74px;font-size:9.00px;color:#1a1a1a;background:#fff;">2500</div>
<div class="cell" style="left:106.00px;top:291.98px;width:52.60px;height:16.74px;line-height:18.74px;font-size:9.00px;color:#1a1a1a;background:#fff;">Cv</div>
<div class="cell" style="left:160.60px;top:291.98px;width:52.40px;height:16.74px;line-height:18.74px;font-size:9.00px;color:#1a1a1a;background:#fff;">Wh/m³/K</div>
<div class="cell" style="left:215.00px;top:291.98px;width:89.60px;height:16.74px;line-height:18.74px;font-size:9.00px;color:#1a1a1a;background:#fff;">395</div>
<div class="cell" style="left:306.60px;top:291.98px;width:89.70px;height:16.74px;line-height:18.74px;font-size:9.00px;color:#1a1a1a;background:#fff;">23</div>
<div class="cell" style="left:398.30px;top:291.98px;width:89.80px;height:16.74px;line-height:18.74px;font-size:9.00px;color:#1a1a1a;background:#fff;">0</div>
<div class="cell" style="left:490.10px;top:291.98px;width:89.80px;height:16.74px;line-height:18.74px;font-size:9.00px;color:#1a1a1a;background:#fff;">23</div>
<div class="cell" style="left:581.90px;top:291.98px;width:89.70px;height:16.74px;line-height:18.74px;font-size:9.00px;color:#1a1a1a;background:#fff;">326</div>
<div class="cell" style="left:106.00px;top:310.72px;width:52.60px;height:16.74px;line-height:18.74px;font-size:9.00px;color:#1a1a1a;background:#fff;">a</div>
<div class="cell" style="left:160.60px;top:310.72px;width:52.40px;height:16.74px;line-height:18.74px;font-size:9.00px;color:#1a1a1a;background:#fff;">m²/s</div>
<div class="cell" style="left:215.00px;top:310.72px;width:89.60px;height:16.74px;line-height:18.74px;font-size:9.00px;color:#1a1a1a;background:#fff;">2.53E-7</div>
<div class="cell" style="left:306.60px;top:310.72px;width:89.70px;height:16.74px;line-height:18.74px;font-size:9.00px;color:#1a1a1a;background:#fff;">4.52E-7</div>
<div class="cell" style="left:398.30px;top:310.72px;width:89.80px;height:16.74px;line-height:18.74px;font-size:9.00px;color:#1a1a1a;background:#fff;">0.0</div>
<div class="cell" style="left:490.10px;top:310.72px;width:89.80px;height:16.74px;line-height:18.74px;font-size:9.00px;color:#1a1a1a;background:#fff;">4.52E-7</div>
<div class="cell" style="left:581.90px;top:310.72px;width:89.70px;height:16.74px;line-height:18.74px;font-size:9.00px;color:#1a1a1a;background:#fff;">1.02E-7</div>
<div class="cell" style="left:106.00px;top:329.45px;width:52.60px;height:16.74px;line-height:18.74px;font-size:9.00px;color:#1a1a1a;background:#fff;">b</div>
<div class="cell" style="left:160.60px;top:329.45px;width:52.40px;height:16.74px;line-height:18.74px;font-size:9.00px;color:#1a1a1a;background:#fff;">J/m²/K/s½</div>
<div class="cell" style="left:215.00px;top:329.45px;width:89.60px;height:16.74px;line-height:18.74px;font-size:9.00px;color:#1a1a1a;background:#fff;">716</div>
<div class="cell" style="left:306.60px;top:329.45px;width:89.70px;height:16.74px;line-height:18.74px;font-size:9.00px;color:#1a1a1a;background:#fff;">56</div>
<div class="cell" style="left:398.30px;top:329.45px;width:89.80px;height:16.74px;line-height:18.74px;font-size:9.00px;color:#1a1a1a;background:#fff;">0</div>
<div class="cell" style="left:490.10px;top:329.45px;width:89.80px;height:16.74px;line-height:18.74px;font-size:9.00px;color:#1a1a1a;background:#fff;">56</div>
<div class="cell" style="left:581.90px;top:329.45px;width:89.70px;height:16.74px;line-height:18.74px;font-size:9.00px;color:#1a1a1a;background:#fff;">375</div>
<div class="cell" style="left:106.00px;top:348.18px;width:52.60px;height:16.74px;line-height:18.74px;font-size:9.00px;color:#1a1a1a;background:#fff;">T int.</div>
<div class="cell" style="left:160.60px;top:348.18px;width:52.40px;height:16.74px;line-height:18.74px;font-size:9.00px;color:#1a1a1a;background:#fff;">ºC</div>
<div class="cell" style="left:215.00px;top:348.18px;width:89.60px;height:16.74px;line-height:18.74px;font-size:9.00px;color:#1a1a1a;background:#fff;">18.7</div>
<div class="cell" style="left:306.60px;top:348.18px;width:89.70px;height:16.74px;line-height:18.74px;font-size:9.00px;color:#1a1a1a;background:#fff;">18.6</div>
<div class="cell" style="left:398.30px;top:348.18px;width:89.80px;height:16.74px;line-height:18.74px;font-size:9.00px;color:#1a1a1a;background:#fff;">11.7</div>
<div class="cell" style="left:490.10px;top:348.18px;width:89.80px;height:16.74px;line-height:18.74px;font-size:9.00px;color:#1a1a1a;background:#fff;">11.7</div>
<div class="cell" style="left:581.90px;top:348.18px;width:89.70px;height:16.74px;line-height:18.74px;font-size:9.00px;color:#1a1a1a;background:#fff;">-19.4</div>
<div class="cell" style="left:106.00px;top:366.92px;width:52.60px;height:16.74px;line-height:18.74px;font-size:9.00px;color:#1a1a1a;background:#fff;">T ext.</div>
<div class="cell" style="left:160.60px;top:366.92px;width:52.40px;height:16.74px;line-height:18.74px;font-size:9.00px;color:#1a1a1a;background:#fff;">ºC</div>
<div class="cell" style="left:215.00px;top:366.92px;width:89.60px;height:16.74px;line-height:18.74px;font-size:9.00px;color:#1a1a1a;background:#fff;">18.6</div>
<div class="cell" style="left:306.60px;top:366.92px;width:89.70px;height:16.74px;line-height:18.74px;font-size:9.00px;color:#1a1a1a;background:#fff;">11.7</div>
<div class="cell" style="left:398.30px;top:366.92px;width:89.80px;height:16.74px;line-height:18.74px;font-size:9.00px;color:#1a1a1a;background:#fff;">11.7</div>
<div class="cell" style="left:490.10px;top:366.92px;width:89.80px;height:16.74px;line-height:18.74px;font-size:9.00px;color:#1a1a1a;background:#fff;">-19.4</div>
<div class="cell" style="left:581.90px;top:366.92px;width:89.70px;height:16.74px;line-height:18.74px;font-size:9.00px;color:#1a1a1a;background:#fff;">-19.9</div>
<div class="cell" style="left:106.00px;top:385.65px;width:52.60px;height:16.74px;line-height:18.74px;font-size:9.00px;color:#e22b2b;background:#fff;">PVS int.</div>
<div class="cell" style="left:160.60px;top:385.65px;width:52.40px;height:16.74px;line-height:18.74px;font-size:9.00px;color:#1a1a1a;background:#fff;">Pa</div>
<div class="cell" style="left:215.00px;top:385.65px;width:89.60px;height:16.74px;line-height:18.74px;font-size:9.00px;color:#e22b2b;background:#fff;">2156</div>
<div class="cell" style="left:306.60px;top:385.65px;width:89.70px;height:16.74px;line-height:18.74px;font-size:9.00px;color:#e22b2b;background:#fff;">2143</div>
<div class="cell" style="left:398.30px;top:385.65px;width:89.80px;height:16.74px;line-height:18.74px;font-size:9.00px;color:#e22b2b;background:#fff;">1375</div>
<div class="cell" style="left:490.10px;top:385.65px;width:89.80px;height:16.74px;line-height:18.74px;font-size:9.00px;color:#e22b2b;background:#fff;">1375</div>
<div class="cell" style="left:581.90px;top:385.65px;width:89.70px;height:16.74px;line-height:18.74px;font-size:9.00px;color:#e22b2b;background:#fff;">131</div>
<div class="cell" style="left:106.00px;top:404.39px;width:52.60px;height:16.74px;line-height:18.74px;font-size:9.00px;color:#e22b2b;background:#fff;">PVS ext.</div>
<div class="cell" style="left:160.60px;top:404.39px;width:52.40px;height:16.74px;line-height:18.74px;font-size:9.00px;color:#1a1a1a;background:#fff;">Pa</div>
<div class="cell" style="left:215.00px;top:404.39px;width:89.60px;height:16.74px;line-height:18.74px;font-size:9.00px;color:#e22b2b;background:#fff;">2143</div>
<div class="cell" style="left:306.60px;top:404.39px;width:89.70px;height:16.74px;line-height:18.74px;font-size:9.00px;color:#e22b2b;background:#fff;">1375</div>
<div class="cell" style="left:398.30px;top:404.39px;width:89.80px;height:16.74px;line-height:18.74px;font-size:9.00px;color:#e22b2b;background:#fff;">1375</div>
<div class="cell" style="left:490.10px;top:404.39px;width:89.80px;height:16.74px;line-height:18.74px;font-size:9.00px;color:#e22b2b;background:#fff;">131</div>
<div class="cell" style="left:581.90px;top:404.39px;width:89.70px;height:16.74px;line-height:18.74px;font-size:9.00px;color:#e22b2b;background:#fff;">125</div>
<div class="cell" style="left:106.00px;top:423.12px;width:52.60px;height:16.74px;line-height:18.74px;font-size:9.00px;color:#2ea32e;background:#fff;">PV int.</div>
<div class="cell" style="left:160.60px;top:423.12px;width:52.40px;height:16.74px;line-height:18.74px;font-size:9.00px;color:#1a1a1a;background:#fff;">Pa</div>
<div class="cell" style="left:215.00px;top:423.12px;width:89.60px;height:16.74px;line-height:18.74px;font-size:9.00px;color:#2ea32e;background:#fff;">1540</div>
<div class="cell" style="left:306.60px;top:423.12px;width:89.70px;height:16.74px;line-height:18.74px;font-size:9.00px;color:#2ea32e;background:#fff;">1521</div>
<div class="cell" style="left:398.30px;top:423.12px;width:89.80px;height:16.74px;line-height:18.74px;font-size:9.00px;color:#2ea32e;background:#fff;">1451</div>
<div class="cell" style="left:490.10px;top:423.12px;width:89.80px;height:16.74px;line-height:18.74px;font-size:9.00px;color:#2ea32e;background:#fff;">1102</div>
<div class="cell" style="left:581.90px;top:423.12px;width:89.70px;height:16.74px;line-height:18.74px;font-size:9.00px;color:#2ea32e;background:#fff;">787</div>
<div class="cell" style="left:106.00px;top:441.86px;width:52.60px;height:16.74px;line-height:18.74px;font-size:9.00px;color:#2ea32e;background:#fff;">PV ext.</div>
<div class="cell" style="left:160.60px;top:441.86px;width:52.40px;height:16.74px;line-height:18.74px;font-size:9.00px;color:#1a1a1a;background:#fff;">Pa</div>
<div class="cell" style="left:215.00px;top:441.86px;width:89.60px;height:16.74px;line-height:18.74px;font-size:9.00px;color:#2ea32e;background:#fff;">1521</div>
<div class="cell" style="left:306.60px;top:441.86px;width:89.70px;height:16.74px;line-height:18.74px;font-size:9.00px;color:#2ea32e;background:#fff;">1451</div>
<div class="cell" style="left:398.30px;top:441.86px;width:89.80px;height:16.74px;line-height:18.74px;font-size:9.00px;color:#2ea32e;background:#fff;">1102</div>
<div class="cell" style="left:490.10px;top:441.86px;width:89.80px;height:16.74px;line-height:18.74px;font-size:9.00px;color:#2ea32e;background:#fff;">787</div>
<div class="cell" style="left:581.90px;top:441.86px;width:89.70px;height:16.74px;line-height:18.74px;font-size:9.00px;color:#2ea32e;background:#fff;">124</div>
<div class="cell" style="left:106.00px;top:460.60px;width:52.60px;height:16.74px;line-height:18.74px;font-size:9.00px;color:#1a1a1a;background:#fff;letter-spacing:-.32px;">Condensation</div>
<div class="cell" style="left:160.60px;top:460.60px;width:52.40px;height:16.74px;line-height:18.74px;font-size:9.00px;color:#1a1a1a;background:#fff;">-</div>
<div class="cell" style="left:215.00px;top:460.60px;width:89.60px;height:16.74px;line-height:18.74px;font-size:9.00px;color:#1a1a1a;background:#fff;">Non</div>
<div class="cell" style="left:305.60px;top:460.10px;width:92.20px;height:18.34px;line-height:20.34px;font-size:9.00px;color:#ffe8e8;background:#ff0000;">Oui</div>
<div class="cell" style="left:397.30px;top:460.10px;width:92.30px;height:18.34px;line-height:20.34px;font-size:9.00px;color:#ffe8e8;background:#ff0000;">Oui</div>
<div class="cell" style="left:489.10px;top:460.10px;width:92.30px;height:18.34px;line-height:20.34px;font-size:9.00px;color:#ffe8e8;background:#ff0000;">Oui</div>
<div class="cell" style="left:580.90px;top:460.10px;width:92.20px;height:18.34px;line-height:20.34px;font-size:9.00px;color:#ffe8e8;background:#ff0000;">Oui</div>
<div class="cell" style="left:106.00px;top:479.33px;width:52.60px;height:16.74px;line-height:18.74px;font-size:9.00px;color:#1a1a1a;background:#fff;">Taux Rth</div>
<div class="cell" style="left:160.60px;top:479.33px;width:52.40px;height:16.74px;line-height:18.74px;font-size:9.00px;color:#1a1a1a;background:#fff;">-</div>
<div class="cell" style="left:215.00px;top:479.33px;width:89.60px;height:16.74px;line-height:18.74px;font-size:9.00px;color:#1a1a1a;background:#fff;">0.0023</div>
<div class="cell" style="left:306.60px;top:479.33px;width:89.70px;height:16.74px;line-height:18.74px;font-size:9.00px;color:#1a1a1a;background:#fff;">0.18</div>
<div class="cell" style="left:398.30px;top:479.33px;width:89.80px;height:16.74px;line-height:18.74px;font-size:9.00px;color:#1a1a1a;background:#fff;">7.3E-6</div>
<div class="cell" style="left:490.10px;top:479.33px;width:89.80px;height:16.74px;line-height:18.74px;font-size:9.00px;color:#1a1a1a;background:#fff;">0.8</div>
<div class="cell" style="left:581.90px;top:479.33px;width:89.70px;height:16.74px;line-height:18.74px;font-size:9.00px;color:#1a1a1a;background:#fff;">0.013</div>
<div class="cell" style="left:106.00px;top:498.06px;width:52.60px;height:16.74px;line-height:18.74px;font-size:9.00px;color:#1a1a1a;background:#fff;">Taux Rvap</div>
<div class="cell" style="left:160.60px;top:498.06px;width:52.40px;height:16.74px;line-height:18.74px;font-size:9.00px;color:#1a1a1a;background:#fff;">-</div>
<div class="cell" style="left:215.00px;top:498.06px;width:89.60px;height:16.74px;line-height:18.74px;font-size:9.00px;color:#1a1a1a;background:#fff;">0.014</div>
<div class="cell" style="left:306.60px;top:498.06px;width:89.70px;height:16.74px;line-height:18.74px;font-size:9.00px;color:#1a1a1a;background:#fff;">0.049</div>
<div class="cell" style="left:398.30px;top:498.06px;width:89.80px;height:16.74px;line-height:18.74px;font-size:9.00px;color:#1a1a1a;background:#fff;">0.25</div>
<div class="cell" style="left:490.10px;top:498.06px;width:89.80px;height:16.74px;line-height:18.74px;font-size:9.00px;color:#1a1a1a;background:#fff;">0.22</div>
<div class="cell" style="left:581.90px;top:498.06px;width:89.70px;height:16.74px;line-height:18.74px;font-size:9.00px;color:#1a1a1a;background:#fff;">0.47</div>
<div class="cell" style="left:106.00px;top:516.80px;width:52.60px;height:16.74px;line-height:18.74px;font-size:9.00px;color:#1a1a1a;background:#fff;">Stockage</div>
<div class="cell" style="left:160.60px;top:516.80px;width:52.40px;height:16.74px;line-height:18.74px;font-size:9.00px;color:#1a1a1a;background:#fff;">Wh/m²</div>
<div class="cell" style="left:215.00px;top:516.80px;width:89.60px;height:16.74px;line-height:18.74px;font-size:9.00px;color:#1a1a1a;background:#fff;">153</div>
<div class="cell" style="left:306.60px;top:516.80px;width:89.70px;height:16.74px;line-height:18.74px;font-size:9.00px;color:#1a1a1a;background:#fff;">66</div>
<div class="cell" style="left:398.30px;top:516.80px;width:89.80px;height:16.74px;line-height:18.74px;font-size:9.00px;color:#1a1a1a;background:#fff;">0</div>
<div class="cell" style="left:490.10px;top:516.80px;width:89.80px;height:16.74px;line-height:18.74px;font-size:9.00px;color:#1a1a1a;background:#fff;">136</div>
<div class="cell" style="left:581.90px;top:516.80px;width:89.70px;height:16.74px;line-height:18.74px;font-size:9.00px;color:#1a1a1a;background:#fff;">2</div>
<div class="a" style="left:104.6px;top:547.4px;width:1146.4px;height:40.8px;background:#d6d6d6"></div>
<div class="cell" style="left:105.20px;top:548.30px;width:141.30px;height:11.80px;line-height:15.60px;font-size:9.00px;color:#1a1a1a;background:#fff;">m².K/W</div>
<div class="cell" style="left:248.50px;top:548.30px;width:141.30px;height:11.80px;line-height:15.60px;font-size:9.00px;color:#1a1a1a;background:#fff;">W/m²/K</div>
<div class="cell" style="left:391.80px;top:548.30px;width:141.30px;height:11.80px;line-height:15.60px;font-size:9.00px;color:#1a1a1a;background:#fff;">kg/m²</div>
<div class="cell" style="left:535.10px;top:548.30px;width:141.30px;height:11.80px;line-height:15.60px;font-size:9.00px;color:#1a1a1a;background:#fff;">Wh/m²</div>
<div class="cell" style="left:678.40px;top:548.30px;width:141.30px;height:11.80px;line-height:15.60px;font-size:9.00px;color:#1a1a1a;background:#fff;">kg/s/m²/Pa</div>
<div class="cell" style="left:821.70px;top:548.30px;width:141.30px;height:11.80px;line-height:15.60px;font-size:9.00px;color:#1a1a1a;background:#fff;">g/h/m²</div>
<div class="cell" style="left:965.00px;top:548.30px;width:141.30px;height:11.80px;line-height:15.60px;font-size:9.00px;color:#1a1a1a;background:#fff;">-</div>
<div class="cell" style="left:1108.30px;top:548.30px;width:141.30px;height:11.80px;line-height:15.60px;font-size:9.00px;color:#1a1a1a;background:#fff;">-</div>
<div class="cell" style="left:105.20px;top:562.00px;width:141.30px;height:11.20px;line-height:13.60px;font-size:9.00px;color:#1a1a1a;background:#fff;">Résistance thermique</div>
<div class="cell" style="left:248.50px;top:562.00px;width:141.30px;height:11.20px;line-height:13.60px;font-size:9.00px;color:#1a1a1a;background:#fff;">U</div>
<div class="cell" style="left:391.80px;top:562.00px;width:141.30px;height:11.20px;line-height:13.60px;font-size:9.00px;color:#1a1a1a;background:#fff;">Masse</div>
<div class="cell" style="left:535.10px;top:562.00px;width:141.30px;height:11.20px;line-height:13.60px;font-size:9.00px;color:#1a1a1a;background:#fff;">Stockage</div>
<div class="cell" style="left:678.40px;top:562.00px;width:141.30px;height:11.20px;line-height:13.60px;font-size:9.00px;color:#1a1a1a;background:#fff;">Perméance</div>
<div class="cell" style="left:821.70px;top:562.00px;width:141.30px;height:11.20px;line-height:13.60px;font-size:9.00px;color:#1a1a1a;background:#fff;">Débit vapeur</div>
<div class="cell" style="left:965.00px;top:562.00px;width:141.30px;height:11.20px;line-height:13.60px;font-size:9.00px;color:#1a1a1a;background:#fff;">Sens chaleur</div>
<div class="cell" style="left:1108.30px;top:562.00px;width:141.30px;height:11.20px;line-height:13.60px;font-size:9.00px;color:#1a1a1a;background:#fff;">Sens vapeur</div>
<div class="cell" style="left:105.20px;top:575.10px;width:141.30px;height:11.50px;line-height:14.70px;font-size:9.00px;color:#1a1a1a;background:#fff;">11.9</div>
<div class="cell" style="left:248.50px;top:575.10px;width:141.30px;height:11.50px;line-height:14.70px;font-size:9.00px;color:#1a1a1a;background:#fff;">0.084</div>
<div class="cell" style="left:391.80px;top:575.10px;width:141.30px;height:11.50px;line-height:14.70px;font-size:9.00px;color:#1a1a1a;background:#fff;">38</div>
<div class="cell" style="left:535.10px;top:575.10px;width:141.30px;height:11.50px;line-height:14.70px;font-size:9.00px;color:#1a1a1a;background:#fff;">357</div>
<div class="cell" style="left:678.40px;top:575.10px;width:141.30px;height:11.50px;line-height:14.70px;font-size:9.00px;color:#1a1a1a;background:#fff;">2.47E-11</div>
<div class="cell" style="left:821.70px;top:575.10px;width:141.30px;height:11.50px;line-height:14.70px;font-size:9.00px;color:#1a1a1a;background:#fff;">0.126</div>
<div class="cell" style="left:965.00px;top:575.10px;width:141.30px;height:11.50px;line-height:14.70px;font-size:9.00px;color:#1a1a1a;background:#fff;"><b style="color:#e22b2b;font-family:'DejaVu Sans',sans-serif;font-size:9.5px">&#8680;</b></div>
<div class="cell" style="left:1108.30px;top:575.10px;width:141.30px;height:11.50px;line-height:14.70px;font-size:9.00px;color:#1a1a1a;background:#fff;"><b style="color:#2ea32e;font-family:'DejaVu Sans',sans-serif;font-size:9.5px">&#8680;</b></div>
<div class="btn" style="left:561px;top:592.5px;width:63px;height:15.3px;line-height:13.2px;font-size:9.00px">A propos...</div>
<div class="btn" style="left:628px;top:592.5px;width:48.6px;height:15.3px;line-height:13.2px;font-size:9.00px">Infos...</div>
<div class="t" style="left:687.6px;top:595.6px;font-size:9.00px;letter-spacing:-.12px;color:#1a1a1a">philippe.courtin@unilim.fr</div>
<div class="t" style="left:680.8px;top:129.4px;font-size:8.5px;letter-spacing:-.13px;color:#1a1a1a">Intérieur</div>
<div class="t" style="left:1139.4px;top:129.4px;width:100px;text-align:right;font-size:8.5px;letter-spacing:-.13px;color:#1a1a1a">Extérieur</div>
<svg class="ico" style="left:677px;top:140px" width="573" height="400" viewBox="677 140 573 400">
<rect x="744" y="165" width="9.6" height="339.6" fill="#d2d2d2"/>
<rect x="753.4" y="165" width="412.2" height="339.6" fill="#ffc466"/>
<rect x="1165.5" y="165" width="18.4" height="339.6" fill="#66f866"/>
<path d="M744.3 165V504.6M753.4 165V504.6" stroke="#a9a9a9" stroke-width=".8" fill="none"/>
<path d="M828.4 165V504.6" stroke="#8c7a58" stroke-width=".9" fill="none"/>
<path d="M1165.5 165V504.6" stroke="#c8b070" stroke-width=".6" fill="none"/>
<path d="M1183.9 165V504.6" stroke="#58b058" stroke-width=".7" fill="none"/>
<path d="M734.5 165 Q739 170.5 744.3 172.6 Q749 174.6 753.4 175 L828.4 301.1 L1165.5 503.6 L1184.2 504.5 L1193.5 504.5" stroke="#e0401c" stroke-width=".85" fill="none" stroke-linejoin="round"/>
<path d="M734.5 273.3 L744.5 273.3 L753.4 276.7 L828.4 287.8 M828.4 345 L1165.5 396.7 L1184.2 504.5 L1193.5 504.5" stroke="#2fa52f" stroke-width=".85" fill="none" stroke-linejoin="round"/>
</svg>
<div class="a" style="left:0;top:699.4px;width:1280px;height:22.2px;background:linear-gradient(#fdfdff 0,#f4f4fa 8%,#a3a3ba 13%,#a9a9bf 22%,#c4c4d4 40%,#dfdfe7 58%,#ebebef 75%,#f3f3f5 92%,#b4b4bc 97%,#9c9ca6 100%)"></div>
<div class="a" style="left:1218.4px;top:700px;width:61.6px;height:21px;background:linear-gradient(#fcfcfe 0,#c6c6d6 12%,#cbcbd9 28%,#dcdce6 50%,#ececf1 75%,#f4f4f6 100%);border-left:1px solid #6e6e84;box-sizing:border-box"></div>
<div class="a" style="left:0;top:699.6px;width:107px;height:21.8px;border-radius:0 5px 7px 0 / 0 9px 11px 0;background:linear-gradient(#3c8237 0,#86cc7e 7%,#7cc674 16%,#58b052 30%,#46a242 48%,#3c9a3a 66%,#36903a 84%,#2c7e30 100%);box-shadow:inset -2.5px 0 2.5px rgba(16,70,20,.75), inset 0 -1px 1px rgba(20,80,24,.5)"></div>
<svg class="ico" style="left:7px;top:702.5px" width="17" height="16" viewBox="0 0 17 16"><path d="M1.6 2.6 q3-1.6 6 0 l-1 5 q-3-1.6-6 0z" fill="#e8542c"/><path d="M9 2.4 q3 1.6 6.4 .2 l-1 5 q-3.4 1.4-6.4-.2z" fill="#7fc242"/><path d="M.6 8.6 q3-1.6 6 0 l-1 5 q-3-1.6-6 0z" fill="#3f7fd8"/><path d="M8 8.6 q3 1.6 6.4 .2 l-1 5 q-3.4 1.4-6.4-.2z" fill="#f5c22e"/></svg>
<div class="t" style="left:27.6px;top:703.6px;font-size:14.8px;font-weight:bold;font-style:italic;color:#fff;text-shadow:1px 1px 1px rgba(20,60,20,.7)">démarrer</div>
<div class="a" style="left:114.6px;top:701.6px;width:105.6px;height:18px;box-sizing:border-box;border-radius:2px;border:1px solid #f6f6fa;background:linear-gradient(#f2f2f8,#dadae6 45%,#e6e6ee 100%);box-shadow:0 0 0 .6px #b9b9c8"></div>
<svg class="ico" style="left:120px;top:703px" width="14" height="14" viewBox="0 0 16 16"><circle cx="8.4" cy="8.6" r="5.6" fill="#1d6cc8"/><path d="M4 12 a5.6 5.6 0 0 0 9.6 -1.4 z" fill="#124a96"/><circle cx="8.4" cy="8.6" r="2.3" fill="#eef4fb"/><rect x="3" y="8" width="11" height="1.7" fill="#eef4fb"/><rect x="10" y="9.6" width="4.4" height="2" fill="#1a5cb4"/><path d="M1.2 13.5 C-1 8 7 1.2 14.6 1.6 C9 2.6 2.2 8 2.6 13.6Z" fill="#f0c030"/></svg>
<div class="t" style="left:136px;top:706px;font-size:9.1px;color:#333">Glaser.html - Wi...</div>
<div class="a" style="left:222px;top:701.4px;width:105.8px;height:19px;box-sizing:border-box;border-radius:2px;background:linear-gradient(#5f6874 0,#6b7480 18%,#727b87 60%,#7b848f 100%);border:1px solid #5c6470"></div>
<svg class="ico" style="left:228px;top:704px" width="13" height="13" viewBox="0 0 12 13"><rect x=".4" y=".4" width="11.2" height="12.2" rx="1" fill="#f3f3f6" stroke="#c4c4d0" stroke-width=".7"/><path d="M6.3 1.6 q-2 1.8 0 3.2 q1.2 1.2-.4 2.6" fill="none" stroke="#e8892a" stroke-width="1"/><path d="M3 8.2 h5.4 q.2 2-2.7 2.2 q-2.9-.2-2.7-2.2z" fill="#5a7aa8"/><path d="M2.6 11.4 h6.4" stroke="#5a7aa8" stroke-width=".8"/></svg>
<div class="t" style="left:243px;top:706px;font-size:9.4px;color:#fff">Diagramme de ...</div>
<div class="t" style="left:1192.6px;top:706.6px;font-size:9.4px;color:#44444c;text-shadow:0 1px 0 #fff">FR</div>
<div class="a" style="left:1191.5px;top:716.3px;width:14px;height:1.4px;background:#b4b4c2"></div>
<svg class="ico" style="left:1211px;top:704.4px" width="13" height="13" viewBox="0 0 13 13"><circle cx="6.5" cy="6.5" r="6" fill="#b9b9c9" stroke="#9a9aae" stroke-width=".8"/><path d="M7.6 3.6 L4.8 6.5 L7.6 9.4" fill="none" stroke="#fff" stroke-width="1.6"/></svg>
<div class="a" style="left:1226px;top:704.4px;width:13px;height:12.4px;box-sizing:border-box;background:#fbfbf8;border:1px solid #222;border-bottom:2.4px solid #111"></div>
<div class="a" style="left:1229.4px;top:706.8px;width:6px;height:6px;box-sizing:border-box;border:1px dotted #888;border-radius:50%"></div>
<div class="t" style="left:1245.6px;top:706.2px;font-size:10.1px;color:#222">11:47</div>
<div class="a" style="left:1183.4px;top:685.5px;width:74px;height:13.9px;box-sizing:border-box;background:#ffffe1;border:1px solid #4a4a4a;border-radius:1.5px;font-size:8.9px;line-height:11.4px;text-align:center;color:#111;white-space:nowrap;letter-spacing:-.1px">Français (France)</div>
<div class="a" style="left:0;top:721.6px;width:1280px;height:14.4px;background:linear-gradient(#dddcd8 0,#d4d2cd 30%,#cfcdc8 100%)"></div>
<svg class="ico" style="left:1104px;top:722.7px" width="120" height="14" viewBox="0 0 120 14"><ellipse cx="7.5" cy="4" rx="5" ry="2.6" fill="#4a90d8" stroke="#1f5ea8" stroke-width=".7"/><path d="M2.5 4v5.5q5 3.4 10 0V4" fill="#3478c8" stroke="#1f5ea8" stroke-width=".7"/><path d="M2.5 6.6q5 3 10 0M2.5 9q5 3 10 0" fill="none" stroke="#cfe2f8" stroke-width=".8"/><circle cx="21.6" cy="7" r="5.4" fill="#dce9f8" stroke="#2a66b8" stroke-width="1.1"/><circle cx="21.6" cy="7" r="1.5" fill="#2a66b8"/><rect x="30.6" y="2" width="9.6" height="10" fill="#d8d8d6" stroke="#a9a9a6" stroke-width=".8"/><rect x="32.4" y="2.4" width="6" height="3.4" fill="#ecebe8"/><rect x="30.6" y="6.6" width="9.6" height="1" fill="#b4b4b0"/><rect x="48" y="1.6" width="7" height="6" fill="#5a9ae0" stroke="#1f5ea8" stroke-width=".8"/><rect x="44.4" y="5.6" width="7" height="6" fill="#7ab2ee" stroke="#1f5ea8" stroke-width=".8"/><path d="M58.6 3.6h3l1 1.2h5.6v6.6h-9.6z" fill="#d6d5d0" stroke="#b2b1ac" stroke-width=".7"/><rect x="72.6" y="2.2" width="8.6" height="9.6" rx="2" fill="#dad9d5" stroke="#b6b5b0" stroke-width=".7"/><circle cx="97.6" cy="7" r="5.3" fill="#8aa4d0" stroke="#566a9a" stroke-width=".7"/><path d="M95.4 3.6q4-1.4 4.6 2.6q.2 3.6-3.4 4.6q2-2.6.2-4z" fill="#2ea82e"/><rect x="106.6" y="1.4" width="10" height="11" fill="#f4f6f0" stroke="#4a6a3a" stroke-width=".8"/><path d="M109.4 3.4h4.4v3.6h2l-4.2 4l-4.2-4h2z" fill="#28b428" stroke="#167016" stroke-width=".5"/></svg>
<div class="t" style="left:1222.6px;top:724.8px;font-family:'DejaVu Sans','Liberation Sans',sans-serif;font-size:8.6px;color:#222">Touche menu</div>
</div>
</body></html>
